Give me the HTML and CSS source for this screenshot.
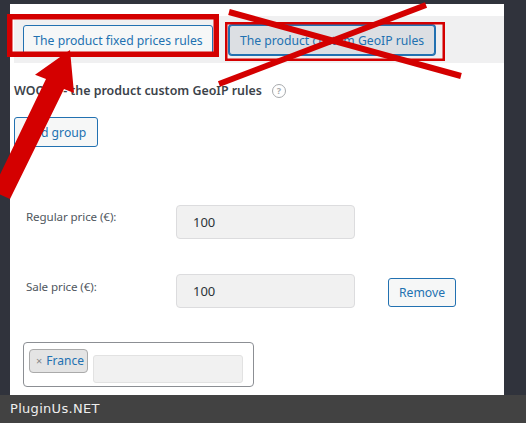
FILE: index.html
```html
<!DOCTYPE html>
<html lang="en">
<head>
<meta charset="utf-8">
<title>GeoIP rules</title>
<link rel="stylesheet" href="styles.css">
</head>
<body>
<div class="screen">
  <div class="stage">
    <div class="panel">
      <div class="tabs">
        <button class="tab tab-fixed">The product fixed prices rules</button>
        <button class="tab tab-geo">The product custom GeoIP rules</button>
      </div>
      <h3 class="heading">WOOCS - the product custom GeoIP rules <span class="help">?</span></h3>
      <button class="btn btn-add">Add group</button>
      <div class="group">
        <div class="row">
          <label class="label">Regular price (€):</label>
          <div class="field">100</div>
        </div>
        <div class="row row-sale">
          <label class="label">Sale price (€):</label>
          <div class="field">100</div>
          <button class="btn btn-remove">Remove</button>
        </div>
        <div class="select">
          <span class="tag"><span class="tag-x">×</span>France</span>
          <span class="search"></span>
        </div>
      </div>
    </div>
  </div>
  <div class="footer">PluginUs.NET</div>
  <svg class="annot" width="526" height="423" viewBox="0 0 526 423">
    <rect x="9.75" y="16.75" width="206.5" height="37.5" fill="none" stroke="#d40000" stroke-width="5.5"/>
    <rect x="226.25" y="23.25" width="217.5" height="36.5" fill="none" stroke="#d40000" stroke-width="2.5"/>
    <line x1="229" y1="12" x2="461" y2="76" stroke="#d40000" stroke-width="6"/>
    <line x1="426" y1="5" x2="219" y2="84" stroke="#d40000" stroke-width="6"/>
    <polygon points="70,50 74,93 64,89 10,199 -8,191 46,79 35,74.7" fill="#d40000"/>
  </svg>
</div>
</body>
</html>
```
FILE: styles.css
```css
* { box-sizing: border-box; }

html, body {
  margin: 0;
  padding: 0;
}

body {
  width: 526px;
  height: 423px;
  overflow: hidden;
  background: #30333c;
  font-family: "Noto Sans", "Open Sans", sans-serif;
}

.screen {
  position: relative;
  width: 526px;
  height: 423px;
  display: flex;
  flex-direction: column;
}

.stage {
  height: 395px;
  padding: 4px 22px 0 10px;
}

.panel {
  height: 391px;
  background: #ffffff;
  padding-left: 4px;
  display: flex;
  flex-direction: column;
  align-items: flex-start;
}

.tabs {
  margin-top: 12px;
  align-self: stretch;
  height: 47px;
  background: #f0f0f1;
  display: flex;
  align-items: flex-start;
  gap: 16px;
  padding: 9px 0 0 9px;
}

.tab {
  height: 30px;
  padding: 0;
  border: 1px solid #2271b1;
  border-radius: 3px;
  background: #f6f7f7;
  color: #2271b1;
  font-family: "Noto Sans", sans-serif;
  font-size: 12.2px;
  text-align: center;
}

.tab-fixed { width: 190px; }

.tab-geo {
  width: 206px;
  background: #dcdfe3;
  box-shadow: 0 0 0 1px #2271b1;
}

.heading {
  margin: 18px 0 0;
  display: flex;
  align-items: center;
  gap: 10px;
  font-size: 12.4px;
  line-height: 20px;
  font-weight: 600;
  color: #3c434a;
}

.help {
  width: 14px;
  height: 14px;
  border: 1.5px solid #a7aaad;
  border-radius: 50%;
  color: #a7aaad;
  font-size: 9px;
  font-weight: 700;
  line-height: 11px;
  text-align: center;
}

.btn {
  padding: 0;
  border: 1px solid #2271b1;
  border-radius: 3px;
  background: #f6f7f7;
  color: #2271b1;
  font-family: "Noto Sans", sans-serif;
  font-size: 12.2px;
}

.btn-add {
  margin-top: 16px;
  width: 84px;
  height: 30px;
}

.group {
  margin-top: 58px;
  padding-left: 9px;
  display: flex;
  flex-direction: column;
  align-items: flex-start;
}

.row {
  display: flex;
  align-items: flex-start;
}

.row-sale {
  margin-top: 35px;
}

.label {
  width: 153px;
  padding: 2px 0 0 3px;
  font-size: 11.6px;
  letter-spacing: -0.1px;
  line-height: 20px;
  color: #50575e;
}

.row-sale .label { padding-top: 3px; }

.field {
  width: 179px;
  height: 34px;
  padding-left: 16px;
  border: 1px solid #dcdcde;
  border-radius: 4px;
  background: #f1f1f1;
  color: #2c3338;
  font-size: 13px;
  line-height: 32px;
}

.btn-remove {
  margin: 4px 0 0 33px;
  width: 68px;
  height: 29px;
}

.select {
  margin-top: 34px;
  width: 231px;
  height: 45px;
  padding: 6px 5px;
  border: 1px solid #8c8f94;
  border-radius: 4px;
  display: flex;
  align-items: flex-start;
  gap: 5px;
}

.tag {
  width: 59px;
  height: 24px;
  border: 1px solid #aaaaaa;
  border-radius: 4px;
  background: #e4e4e4;
  color: #2271b1;
  font-size: 12px;
  line-height: 22px;
  padding-left: 6px;
}

.tag-x {
  color: #888888;
  font-size: 11px;
  margin-right: 4px;
}

.search {
  margin-top: 6px;
  width: 150px;
  height: 28px;
  border: 1px solid #e2e2e2;
  border-radius: 3px;
  background: #f1f1f1;
}

.footer {
  height: 28px;
  padding-left: 10px;
  background: #424242;
  color: #eeeeee;
  font-family: "DejaVu Sans", sans-serif;
  font-size: 13px;
  letter-spacing: 0.3px;
  line-height: 28px;
}

.annot {
  position: absolute;
  left: 0;
  top: 0;
  pointer-events: none;
}
```
